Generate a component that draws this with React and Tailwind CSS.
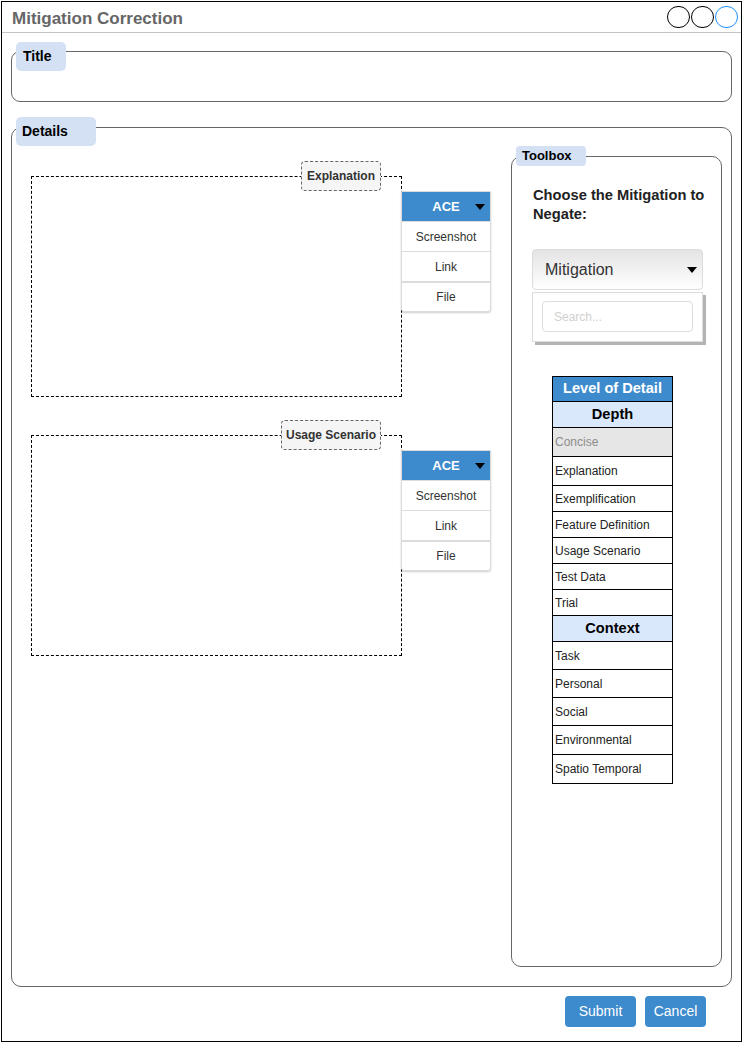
import React from "react";

const depthRows = [
  { label: "Concise", h: "h-[29px]", muted: true },
  { label: "Explanation", h: "h-[29px]" },
  { label: "Exemplification", h: "h-[26px]" },
  { label: "Feature Definition", h: "h-[26px]" },
  { label: "Usage Scenario", h: "h-[26px]" },
  { label: "Test Data", h: "h-[26px]" },
  { label: "Trial", h: "h-[26px]" },
];

const contextRows = [
  { label: "Task", h: "h-[28px]" },
  { label: "Personal", h: "h-[28px]" },
  { label: "Social", h: "h-[28px]" },
  { label: "Environmental", h: "h-[29px]" },
  { label: "Spatio Temporal", h: "h-[29px]" },
];

function Caret({ className = "" }) {
  return (
    <svg width="10" height="6" viewBox="0 0 10 6" className={className}>
      <polygon points="0,0 10,0 5,6" fill="#000" />
    </svg>
  );
}

// Attachment menu that sits on the right edge of a dashed box
function AttachMenu() {
  return (
    <div className="absolute left-[369px] top-[14px] w-[90px] bg-white border border-[#dcdcdc] rounded-b-[3px] shadow-[0_1px_2px_rgba(0,0,0,0.2)] text-[12px] text-[#333]">
      <div className="relative h-[29px] bg-[#3d8bcd] flex items-center justify-center text-white font-bold text-[13px]">
        ACE
        <Caret className="absolute right-[5px] top-[12px]" />
      </div>
      <div className="h-[30px] flex items-center justify-center border-t border-[#dcdcdc]">Screenshot</div>
      <div className="h-[30px] flex items-center justify-center border-t border-[#dcdcdc]">Link</div>
      <div className="h-[30px] flex items-center justify-center border-t-2 border-[#dcdcdc]">File</div>
    </div>
  );
}

function DashedBox({ label, labelW, className = "" }) {
  return (
    <div className={`relative w-[371px] h-[221px] border border-dashed border-black ${className}`}>
      <div
        className={`absolute top-[-16px] right-[20px] ${labelW} h-[30px] bg-[#f5f5f5] border border-dashed border-[#666] rounded-[4px] flex items-center justify-center text-[12px] font-bold text-[#333]`}
      >
        {label}
      </div>
      <AttachMenu />
    </div>
  );
}

function Row({ label, h, muted }) {
  return (
    <div
      className={`${h} flex items-center pl-[2px] border-b border-black text-[12px] ${
        muted ? "bg-[#e6e6e6] text-[#8c8c8c]" : "bg-white text-[#222]"
      }`}
    >
      {label}
    </div>
  );
}

export default function App() {
  return (
    <div className="w-[743px] h-[1043px] p-px bg-white font-['Liberation_Sans',Arial,sans-serif]">
      <div className="h-full border border-black flex flex-col">
        {/* ── Window header ─────────────────────────────── */}
        <div className="h-[30px] shrink-0 border-b border-[#c4c4c4] flex items-center justify-between pl-[10px] pr-[3px] box-content">
          <span className="pt-[3px] text-[17px] font-bold text-[#666]">Mitigation Correction</span>
          <div className="flex gap-px">
            <span className="w-[23px] h-[22px] rounded-full border border-black" />
            <span className="w-[23px] h-[22px] rounded-full border border-black" />
            <span className="w-[23px] h-[22px] rounded-full border border-[#1e90ff]" />
          </div>
        </div>

        {/* ── Title group ─────────────────────────────── */}
        <div className="relative mt-[18px] ml-[9px] mr-[9px] h-[51px] border border-[#666] rounded-[9px]">
          <div className="absolute top-[-10px] left-[4px] w-[50px] h-[29px] bg-[#d4e1f5] rounded-[5px] pl-[7px] pt-[4px] text-[14px] font-bold text-black">
            Title
          </div>
        </div>

        {/* ── Details group ─────────────────────────────── */}
        <div className="relative mt-[25px] ml-[9px] mr-[9px] h-[860px] border border-[#666] rounded-[10px] flex items-start justify-between">
          <div className="absolute top-[-11px] left-[4px] w-[80px] h-[29px] bg-[#d4e1f5] rounded-[5px] pl-[6px] pt-[4px] text-[14px] font-bold text-black">
            Details
          </div>

          <div className="pt-[48px] pl-[19px] flex flex-col">
            <DashedBox label="Explanation" labelW="w-[80px]" />
            <DashedBox label="Usage Scenario" labelW="w-[100px]" className="mt-[38px]" />
          </div>

          {/* Toolbox */}
          <div className="relative mt-[28px] mr-[9px] w-[211px] h-[811px] border border-[#666] rounded-[10px]">
            <div className="absolute top-[-11px] left-[4px] w-[70px] h-[20px] bg-[#d4e1f5] rounded-[4px] pl-[6px] text-[13px] leading-[20px] font-bold text-black">
              Toolbox
            </div>

            <p className="mt-[29px] pl-[21px] text-[14.7px] leading-[19px] font-bold text-[#222]">
              Choose the Mitigation to
              <br />
              Negate:
            </p>

            <div className="mt-[25px] ml-[20px] w-[171px] h-[41px] border border-[#dcdcdc] rounded-[4px] bg-linear-to-b from-[#e4e4e4] to-white flex items-center justify-between pl-[12px] pr-[5px]">
              <span className="text-[16px] text-[#333]">Mitigation</span>
              <Caret />
            </div>

            <div className="mt-[2px] ml-[20px] w-[171px] h-[50px] border border-[#ddd] bg-white shadow-[3px_3px_0_#b4b4b4] pl-[9px] pt-[8px]">
              <div className="w-[151px] h-[31px] border border-[#ddd] rounded-[4px] flex items-center pl-[11px] text-[12px] text-[#d0d0d0]">
                Search...
              </div>
            </div>

            {/* Level of detail table */}
            <div className="mt-[34px] ml-[40px] w-[121px] border border-b-0 border-black">
              <div className="h-[25px] bg-[#3d8bcd] border-b border-black flex items-center justify-center text-[14.6px] font-bold text-white">
                Level of Detail
              </div>
              <div className="h-[26px] bg-[#dae8fc] border-b border-black flex items-center justify-center text-[14.6px] font-bold text-black">
                Depth
              </div>
              {depthRows.map((r) => (
                <Row key={r.label} {...r} />
              ))}
              <div className="h-[26px] bg-[#dae8fc] border-b border-black flex items-center justify-center text-[14.6px] font-bold text-black">
                Context
              </div>
              {contextRows.map((r) => (
                <Row key={r.label} {...r} />
              ))}
            </div>
          </div>
        </div>

        {/* ── Actions ─────────────────────────────── */}
        <div className="mt-[9px] pr-[35px] flex justify-end gap-[9px]">
          <button className="w-[71px] h-[31px] rounded-[4px] bg-[#3d8bcd] text-white text-[14px]">Submit</button>
          <button className="w-[61px] h-[31px] rounded-[4px] bg-[#3d8bcd] text-white text-[14px]">Cancel</button>
        </div>
      </div>
    </div>
  );
}
